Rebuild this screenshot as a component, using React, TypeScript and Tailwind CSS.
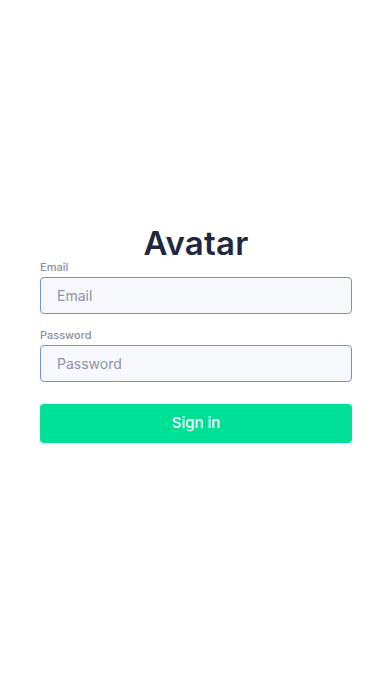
export default function App() {
  return (
    <div
      className="min-h-[696px] w-full bg-white"
      style={{ fontFamily: 'Inter, "Noto Sans", sans-serif' }}
    >
      <div className="px-10 pt-[224px]">
        <h1 className="text-center text-[33px] font-semibold leading-[38px] tracking-[0.2px] text-[#1f2840]">
          Avatar
        </h1>

        <form className="-mt-[2px]" onSubmit={(e) => e.preventDefault()}>
          {/* Email */}
          <label className="block text-[11px] leading-[14px] font-medium text-[#8a8fa2] mb-[3px]">
            Email
          </label>
          <input
            type="email"
            placeholder="Email"
            className="block w-full h-[37px] rounded-[4px] border border-[#7390db] bg-[#f7f8fc] px-4 text-[14px] text-[#1f2840] placeholder-[#8d92a6] outline-none"
          />

          {/* Password */}
          <label className="block mt-[14px] text-[11px] leading-[14px] font-medium text-[#8a8fa2] mb-[3px]">
            Password
          </label>
          <input
            type="password"
            placeholder="Password"
            className="block w-full h-[37px] rounded-[4px] border border-[#7390db] bg-[#f7f8fc] px-4 text-[14px] text-[#1f2840] placeholder-[#8d92a6] outline-none"
          />

          <button
            type="submit"
            className="mt-[22px] block w-full h-[39px] rounded-[4px] bg-[#00df96] text-[15px] font-medium text-white"
          >
            Sign in
          </button>
        </form>
      </div>
    </div>
  )
}
